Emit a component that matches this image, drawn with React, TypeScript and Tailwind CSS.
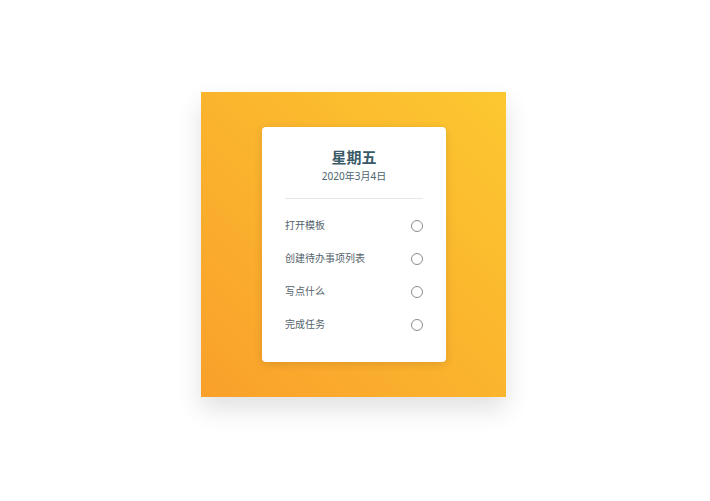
import React from 'react';

const tasks = ['打开模板', '创建待办事项列表', '写点什么', '完成任务'];

const App: React.FC = () => {
  return (
    <div className="min-h-screen bg-white flex justify-center pt-[92px]" style={{ fontFamily: '"Noto Sans", "Noto Sans CJK SC", sans-serif' }}>
      <div className="w-[305px] h-[305px] mr-[3px] bg-linear-to-tr from-[#f9a02b] to-[#fcc830] shadow-[0_12px_24px_rgba(0,0,0,0.12)] flex items-center justify-center">
        <div className="w-[184px] h-[235px] ml-[1px] bg-white rounded-[4px] shadow-[0_2px_10px_rgba(0,0,0,0.12)] px-[23px] pt-[20px]">
          <div className="text-center">
            <h1 className="text-[15px] leading-[20px] font-bold text-[#3a5a68]">星期五</h1>
            <p className="text-[10px] leading-[14px] mt-[2px] text-[#4b6470]">2020年3月4日</p>
          </div>
          <div className="h-px bg-[#e6e8ea] mt-[15px] mb-[10px]" />
          <ul>
            {tasks.map((t) => (
              <li key={t} className="h-[33px] flex items-center justify-between">
                <span className="text-[10px] text-[#55636c]">{t}</span>
                <span className="w-[12px] h-[12px] rounded-full border border-[#8c8c8c]" />
              </li>
            ))}
          </ul>
        </div>
      </div>
    </div>
  );
};

export default App;
